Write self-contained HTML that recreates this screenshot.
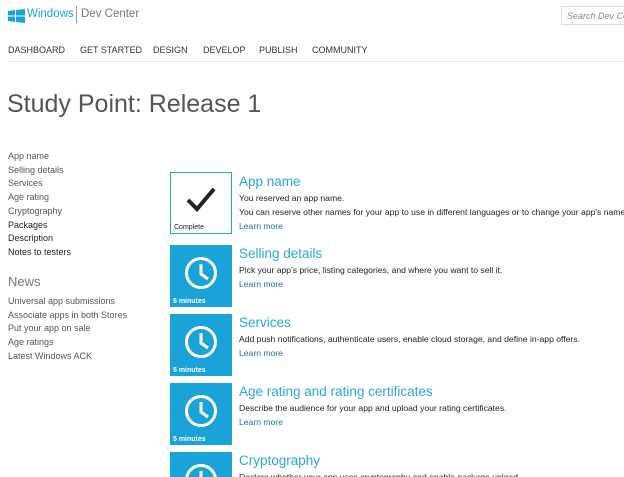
<!DOCTYPE html>
<html><head><meta charset="utf-8"><style>
*{margin:0;padding:0;box-sizing:border-box}
html,body{width:624px;height:477px;overflow:hidden}
body{background:#fff;font-family:"Liberation Sans",sans-serif;position:relative;color:#222}
.a{position:absolute;white-space:nowrap}
.nav{font-size:9px;color:#333;top:45px}
.side{font-size:9px;color:#555;left:8px;line-height:13.7px}
.tile{position:absolute;left:170px;width:62px;height:62px;background:#1aa3d9}
.tile span{position:absolute;left:3px;bottom:2px;font-size:7px;color:#fff;font-weight:bold}
.tile svg{position:absolute;left:14px;top:11px}
.t{position:absolute;left:239px;font-size:13.5px;color:#2aa8dc;white-space:nowrap}
.d{position:absolute;left:239px;font-size:8.6px;color:#222;white-space:nowrap}
.l{position:absolute;left:239px;font-size:8.6px;color:#1a70b0;white-space:nowrap}
</style></head><body>
<svg class="a" style="left:8px;top:9px" width="17" height="14" viewBox="0 0 17 14"><path d="M0 2 L7 1 V6.5 H0Z M8 1 L17 0 V6.5 H8Z M0 7.5 H7 V13 L0 12Z M8 7.5 H17 V14 L8 13Z" fill="#1aa3d9"/></svg>
<div class="a" style="left:27px;top:8px;font-size:11.5px;color:#1aa3d9">Windows</div>
<div class="a" style="left:76px;top:6px;width:1px;height:17px;background:#999"></div>
<div class="a" style="left:81px;top:8px;font-size:11.5px;color:#777">Dev Center</div>
<div class="a" style="left:561px;top:6px;width:70px;height:19px;border:1px solid #ddd;font-size:9px;font-style:italic;color:#888;padding:4px 0 0 5px">Search Dev Center</div>
<div class="a nav" style="left:8px">DASHBOARD</div>
<div class="a nav" style="left:80px">GET STARTED</div>
<div class="a nav" style="left:153px">DESIGN</div>
<div class="a nav" style="left:203px">DEVELOP</div>
<div class="a nav" style="left:259px">PUBLISH</div>
<div class="a nav" style="left:312px">COMMUNITY</div>
<div class="a" style="left:8px;top:61px;width:616px;height:1px;background:#e6e6e6"></div>
<div class="a" style="left:7px;top:90px;font-size:25px;color:#555">Study Point: Release 1</div>
<div class="a side" style="top:150px">App name<br>Selling details<br>Services<br>Age rating<br>Cryptography<br><span style="color:#222">Packages<br>Description<br>Notes to testers</span></div>
<div class="a" style="left:8px;top:274px;font-size:13px;color:#777">News</div>
<div class="a side" style="top:295px">Universal app submissions<br>Associate apps in both Stores<br>Put your app on sale<br>Age ratings<br>Latest Windows ACK</div>

<div class="tile" style="top:172px;background:#fff;border:1px solid #1aa3d9"><svg style="left:14px;top:13px" width="32" height="28" viewBox="0 0 32 28"><path d="M3 14 L12 23 L29 3" stroke="#222" stroke-width="4" fill="none"/></svg><span style="color:#222;font-weight:normal">Complete</span></div>
<div class="t" style="top:174px">App name</div>
<div class="d" style="top:193px">You reserved an app name.</div>
<div class="d" style="top:207px">You can reserve other names for your app to use in different languages or to change your app's name.</div>
<div class="l" style="top:221px">Learn more</div>

<div class="tile" style="top:245px"><svg width="34" height="34" viewBox="0 0 34 34"><circle cx="17" cy="17" r="14.5" stroke="#fff" stroke-width="3" fill="none"/><path d="M17 8 V18 L24 23" stroke="#fff" stroke-width="3" fill="none"/></svg><span>5 minutes</span></div>
<div class="t" style="top:246px">Selling details</div>
<div class="d" style="top:265px">Pick your app's price, listing categories, and where you want to sell it.</div>
<div class="l" style="top:279px">Learn more</div>

<div class="tile" style="top:314px"><svg width="34" height="34" viewBox="0 0 34 34"><circle cx="17" cy="17" r="14.5" stroke="#fff" stroke-width="3" fill="none"/><path d="M17 8 V18 L24 23" stroke="#fff" stroke-width="3" fill="none"/></svg><span>5 minutes</span></div>
<div class="t" style="top:315px">Services</div>
<div class="d" style="top:334px">Add push notifications, authenticate users, enable cloud storage, and define in-app offers.</div>
<div class="l" style="top:348px">Learn more</div>

<div class="tile" style="top:383px"><svg width="34" height="34" viewBox="0 0 34 34"><circle cx="17" cy="17" r="14.5" stroke="#fff" stroke-width="3" fill="none"/><path d="M17 8 V18 L24 23" stroke="#fff" stroke-width="3" fill="none"/></svg><span>5 minutes</span></div>
<div class="t" style="top:384px">Age rating and rating certificates</div>
<div class="d" style="top:403px">Describe the audience for your app and upload your rating certificates.</div>
<div class="l" style="top:417px">Learn more</div>

<div class="tile" style="top:452px"><svg width="34" height="34" viewBox="0 0 34 34"><circle cx="17" cy="17" r="14.5" stroke="#fff" stroke-width="3" fill="none"/><path d="M17 8 V18 L24 23" stroke="#fff" stroke-width="3" fill="none"/></svg></div>
<div class="t" style="top:453px">Cryptography</div>
<div class="d" style="top:472px">Declare whether your app uses cryptography and enable package upload.</div>
</body></html>
